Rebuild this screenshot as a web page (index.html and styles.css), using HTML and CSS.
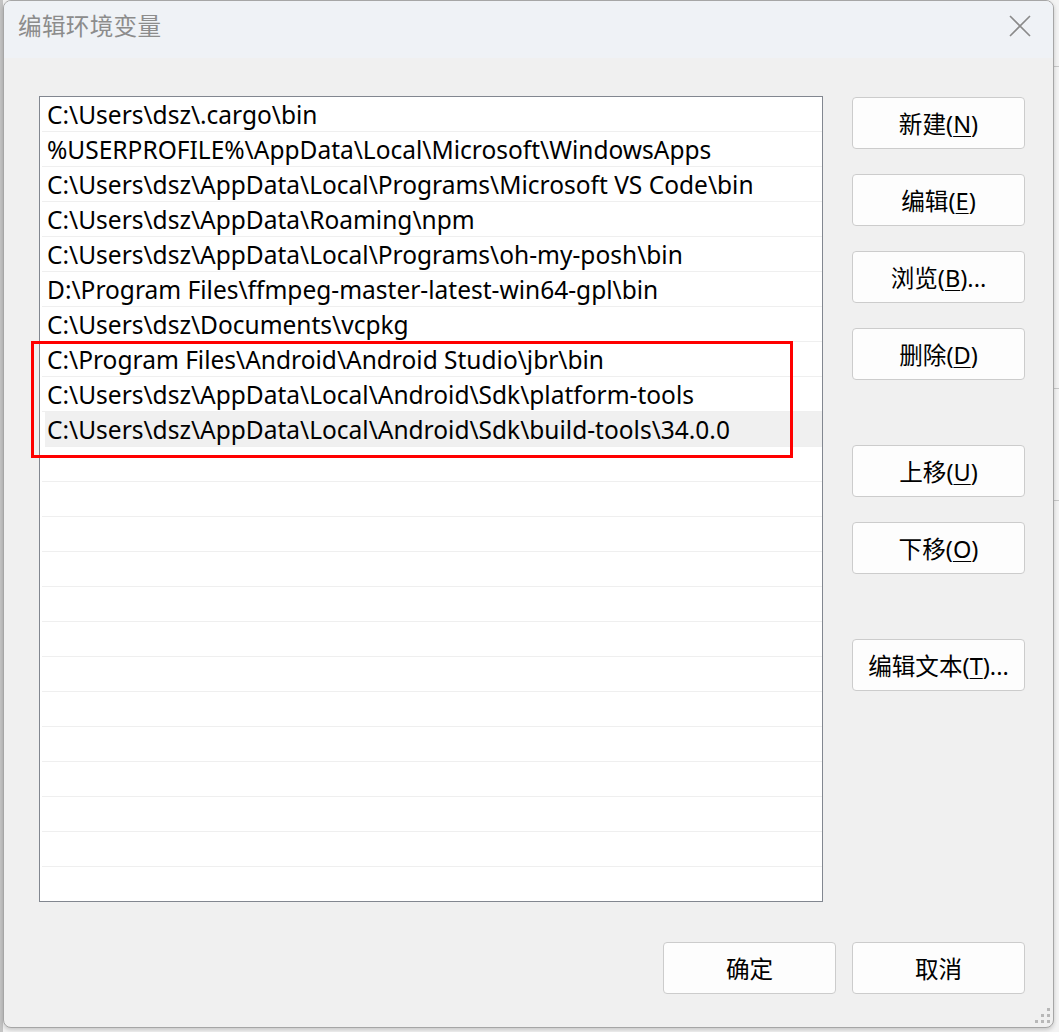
FILE: index.html
```html
<!DOCTYPE html>
<html lang="zh-CN">
<head>
<meta charset="utf-8">
<title>编辑环境变量</title>
<link rel="stylesheet" href="styles.css">
</head>
<body>
<div class="backdrop-left"></div>
<div class="window">
  <div class="titlebar">
    <span class="title">编辑环境变量</span>
    <svg class="close" width="22" height="22" viewBox="0 0 22 22"><path d="M1 1 L21 21 M21 1 L1 21" stroke="#8a8a8a" stroke-width="1.6" fill="none"/></svg>
  </div>
  <div class="body">
    <div class="main">
      <div class="listwrap">
        <div class="list">
          <div class="row">C:\Users\dsz\.cargo\bin</div>
          <div class="row">%USERPROFILE%\AppData\Local\Microsoft\WindowsApps</div>
          <div class="row">C:\Users\dsz\AppData\Local\Programs\Microsoft VS Code\bin</div>
          <div class="row">C:\Users\dsz\AppData\Roaming\npm</div>
          <div class="row">C:\Users\dsz\AppData\Local\Programs\oh-my-posh\bin</div>
          <div class="row">D:\Program Files\ffmpeg-master-latest-win64-gpl\bin</div>
          <div class="row">C:\Users\dsz\Documents\vcpkg</div>
          <div class="row">C:\Program Files\Android\Android Studio\jbr\bin</div>
          <div class="row">C:\Users\dsz\AppData\Local\Android\Sdk\platform-tools</div>
          <div class="row selected">C:\Users\dsz\AppData\Local\Android\Sdk\build-tools\34.0.0</div>
          <div class="row"></div>
          <div class="row"></div>
          <div class="row"></div>
          <div class="row"></div>
          <div class="row"></div>
          <div class="row"></div>
          <div class="row"></div>
          <div class="row"></div>
          <div class="row"></div>
          <div class="row"></div>
          <div class="row"></div>
          <div class="row"></div>
          <div class="row"></div>
        </div>
        <div class="highlight-box"></div>
      </div>
      <div class="side">
        <button class="btn">新建(<u>N</u>)</button>
        <button class="btn">编辑(<u>E</u>)</button>
        <button class="btn">浏览(<u>B</u>)...</button>
        <button class="btn">删除(<u>D</u>)</button>
        <button class="btn group">上移(<u>U</u>)</button>
        <button class="btn">下移(<u>O</u>)</button>
        <button class="btn group">编辑文本(<u>T</u>)...</button>
      </div>
    </div>
    <div class="footer">
      <button class="btn">确定</button>
      <button class="btn">取消</button>
    </div>
    <svg class="grip" width="16" height="16" viewBox="0 0 16 16">
      <rect x="12" y="0" width="3" height="3" fill="#b8b8b8"/>
      <rect x="6" y="6" width="3" height="3" fill="#b8b8b8"/>
      <rect x="12" y="6" width="3" height="3" fill="#b8b8b8"/>
      <rect x="0" y="12" width="3" height="3" fill="#b8b8b8"/>
      <rect x="6" y="12" width="3" height="3" fill="#b8b8b8"/>
      <rect x="12" y="12" width="3" height="3" fill="#b8b8b8"/>
    </svg>
  </div>
</div>
</body>
</html>
```

FILE: styles.css
```css
html, body {
  margin: 0;
  padding: 0;
}
body {
  width: 1059px;
  height: 1032px;
  overflow: hidden;
  background: #f3f3f3;
  font-family: "Noto Sans", "Noto Sans CJK SC", sans-serif;
  position: relative;
  background-image:
    linear-gradient(#c8c8c8, #c8c8c8),
    linear-gradient(#c8c8c8, #c8c8c8),
    linear-gradient(#c8c8c8, #c8c8c8);
  background-size: 8px 1px, 8px 1px, 8px 1px;
  background-position: 1054px 66px, 1054px 388px, 1054px 500px;
  background-repeat: no-repeat;
}
.backdrop-left {
  position: absolute;
  left: 0;
  top: 0;
  width: 3px;
  height: 1032px;
  background: #c4c4c4;
}
.window {
  position: relative;
  margin-left: 3px;
  width: 1051px;
  height: 1028px;
  box-sizing: border-box;
  border: 1px solid #a6a6a6;
  border-radius: 8px;
  background: #f0f0f0;
  overflow: hidden;
  box-shadow: 0 2px 4px rgba(0,0,0,0.18);
  display: flex;
  flex-direction: column;
}
.titlebar {
  height: 57px;
  flex: none;
  background: #eff2f6;
  display: flex;
  align-items: center;
  justify-content: space-between;
  padding: 0 22px 0 14px;
}
.title {
  font-size: 23.6px;
  color: #8c8c8c;
  letter-spacing: 0.3px;
  margin-top: -9px;
}
.close {
  display: block;
  margin-top: -8px;
}
.body {
  flex: 1;
  position: relative;
  padding: 38px 0 0 35px;
  display: flex;
  flex-direction: column;
}
.main {
  display: flex;
  gap: 29px;
}
.listwrap {
  position: relative;
}
.list {
  width: 784px;
  height: 806px;
  box-sizing: border-box;
  border: 1px solid #828790;
  background: #fff;
  overflow: hidden;
  padding: 0 0 0 2px;
}
.row {
  height: 35px;
  box-sizing: border-box;
  border-bottom: 1px solid #efefef;
  font-size: 24.5px;
  line-height: 36px;
  color: #000;
  padding-left: 5px;
  white-space: nowrap;
}
.row.selected {
  background: #f0f0f0;
  margin-left: 3px;
  padding-left: 2px;
}
.highlight-box {
  position: absolute;
  left: -8px;
  top: 245px;
  width: 762px;
  height: 117px;
  box-sizing: border-box;
  border: 3px solid #ff0000;
}
.side {
  display: flex;
  flex-direction: column;
  gap: 25px;
  padding-top: 1px;
}
.btn {
  width: 173px;
  height: 52px;
  box-sizing: border-box;
  background: #fdfdfd;
  border: 1px solid #cccccc;
  border-radius: 4px;
  font-family: "Noto Sans", "Noto Sans CJK SC", sans-serif;
  font-size: 23.6px;
  color: #000;
  padding: 0;
  margin: 0;
}
.btn u {
  text-underline-offset: 3px;
  text-decoration-thickness: 1px;
}
.btn.group {
  margin-top: 40px;
}
.footer {
  display: flex;
  justify-content: flex-end;
  gap: 16px;
  margin-top: 40px;
  padding-right: 28px;
}
.grip {
  position: absolute;
  right: 2px;
  bottom: 3px;
}
```
